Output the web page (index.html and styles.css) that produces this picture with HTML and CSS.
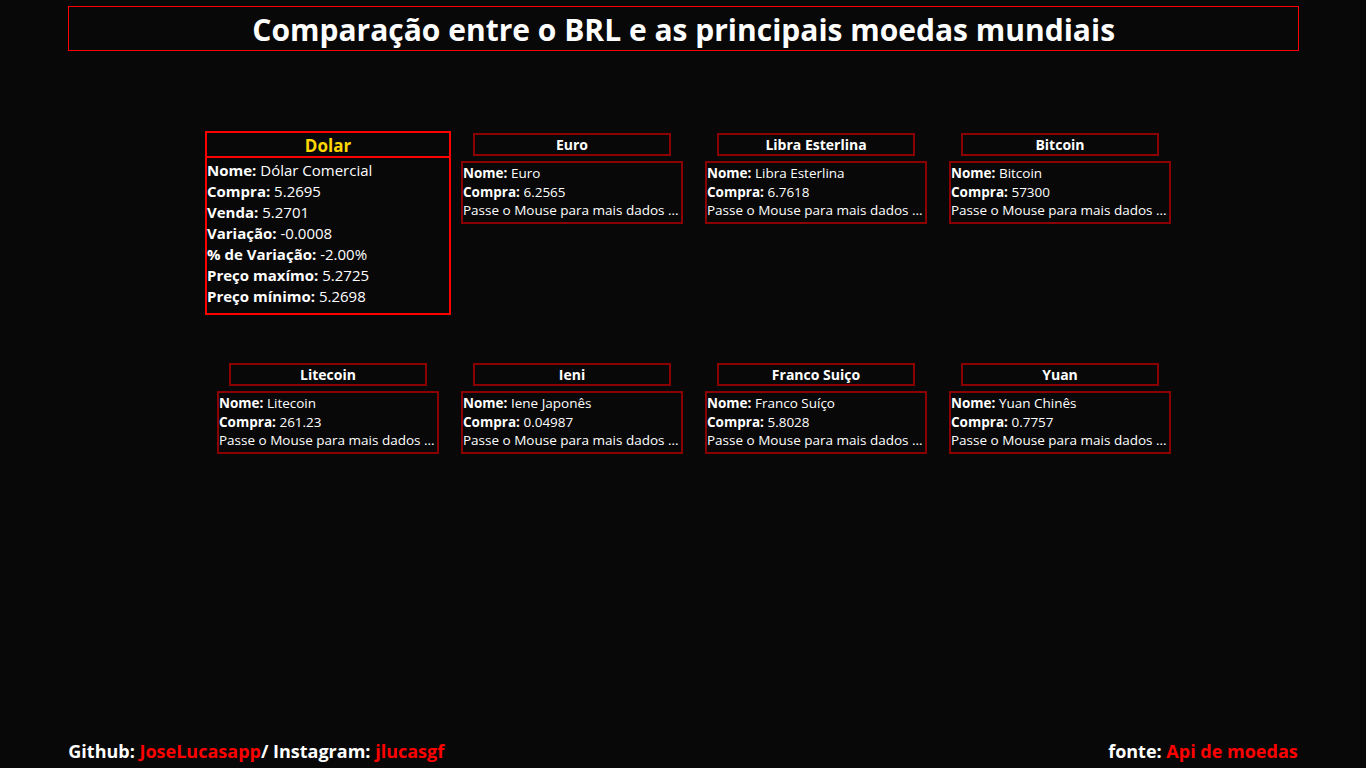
FILE: index.html
```html
<!DOCTYPE html>
<html lang="pt-BR">
<head>
<meta charset="utf-8">
<title>Comparação entre o BRL e as principais moedas mundiais</title>
<link rel="stylesheet" href="styles.css">
</head>
<body>
<h1 class="page-title">Comparação entre o BRL e as principais moedas mundiais</h1>
<main class="grid">
  <div class="card card-active">
    <div class="card-title">Dolar</div>
    <div class="card-body">
      <p><b>Nome:</b> Dólar Comercial</p>
      <p><b>Compra:</b> 5.2695</p>
      <p><b>Venda:</b> 5.2701</p>
      <p><b>Variação:</b> -0.0008</p>
      <p><b>% de Variação:</b> -2.00%</p>
      <p><b>Preço maxímo:</b> 5.2725</p>
      <p><b>Preço mínimo:</b> 5.2698</p>
    </div>
  </div>
  <div class="card">
    <div class="card-title">Euro</div>
    <div class="card-body">
      <p><b>Nome:</b> Euro</p>
      <p><b>Compra:</b> 6.2565</p>
      <p>Passe o Mouse para mais dados ...</p>
    </div>
  </div>
  <div class="card">
    <div class="card-title">Libra Esterlina</div>
    <div class="card-body">
      <p><b>Nome:</b> Libra Esterlina</p>
      <p><b>Compra:</b> 6.7618</p>
      <p>Passe o Mouse para mais dados ...</p>
    </div>
  </div>
  <div class="card">
    <div class="card-title">Bitcoin</div>
    <div class="card-body">
      <p><b>Nome:</b> Bitcoin</p>
      <p><b>Compra:</b> 57300</p>
      <p>Passe o Mouse para mais dados ...</p>
    </div>
  </div>
  <div class="card">
    <div class="card-title">Litecoin</div>
    <div class="card-body">
      <p><b>Nome:</b> Litecoin</p>
      <p><b>Compra:</b> 261.23</p>
      <p>Passe o Mouse para mais dados ...</p>
    </div>
  </div>
  <div class="card">
    <div class="card-title">Ieni</div>
    <div class="card-body">
      <p><b>Nome:</b> Iene Japonês</p>
      <p><b>Compra:</b> 0.04987</p>
      <p>Passe o Mouse para mais dados ...</p>
    </div>
  </div>
  <div class="card">
    <div class="card-title">Franco Suiço</div>
    <div class="card-body">
      <p><b>Nome:</b> Franco Suíço</p>
      <p><b>Compra:</b> 5.8028</p>
      <p>Passe o Mouse para mais dados ...</p>
    </div>
  </div>
  <div class="card">
    <div class="card-title">Yuan</div>
    <div class="card-body">
      <p><b>Nome:</b> Yuan Chinês</p>
      <p><b>Compra:</b> 0.7757</p>
      <p>Passe o Mouse para mais dados ...</p>
    </div>
  </div>
</main>
<footer class="footer">
  <div class="footer-left">Github: <a class="link" href="#">JoseLucasapp</a>/ Instagram: <a class="link" href="#">jlucasgf</a></div>
  <div class="footer-right">fonte: <a class="link" href="#">Api de moedas</a></div>
</footer>
</body>
</html>
```
FILE: styles.css
```css
html, body {
  margin: 0;
  padding: 0;
}
body {
  background: #080808;
  color: #fff;
  font-family: "Open Sans", "Noto Sans", sans-serif;
  height: 100vh;
  display: flex;
  flex-direction: column;
  overflow: hidden;
}
.page-title {
  margin: 6px 4.9% 0 5%;
  border: 1px solid #f00;
  text-align: center;
  font-size: 30px;
  font-weight: 700;
  line-height: 46px;
  height: 43px;
  overflow: hidden;
}
.grid {
  flex: 1;
  display: grid;
  grid-template-columns: repeat(4, 244px);
  grid-auto-rows: 230px;
  align-content: start;
  padding: 80px 0 0 206px;
}
.card {
  width: 222px;
  justify-self: center;
  align-self: start;
  margin-top: 2px;
}
.card-title {
  width: 194px;
  margin: 0 auto;
  height: 19px;
  border: 2px solid #8b0000;
  text-align: center;
  font-size: 14px;
  font-weight: 700;
  line-height: 19px;
}
.card-body {
  margin-top: 5px;
  border: 2px solid #8b0000;
  padding: 1px 0 2px;
  font-size: 13.5px;
  line-height: 18.5px;
}
.card-body p {
  margin: 0;
  white-space: nowrap;
}
.card-body b {
  font-weight: 700;
}
.card-active {
  width: 246px;
  margin-top: 0;
}
.card-active .card-title {
  width: auto;
  height: 23px;
  border: 2px solid #f00;
  color: #ffd700;
  font-size: 17px;
  line-height: 25px;
}
.card-active .card-body {
  margin-top: 0;
  border: 2px solid #f00;
  border-top: none;
  padding: 2px 0 6px;
  font-size: 15px;
  line-height: 21px;
}
.footer {
  margin: 0 5%;
  padding-bottom: 6px;
  display: flex;
  justify-content: space-between;
  font-size: 18px;
  font-weight: 700;
  line-height: 22px;
}
.link {
  color: #f00;
  text-decoration: none;
}
```
